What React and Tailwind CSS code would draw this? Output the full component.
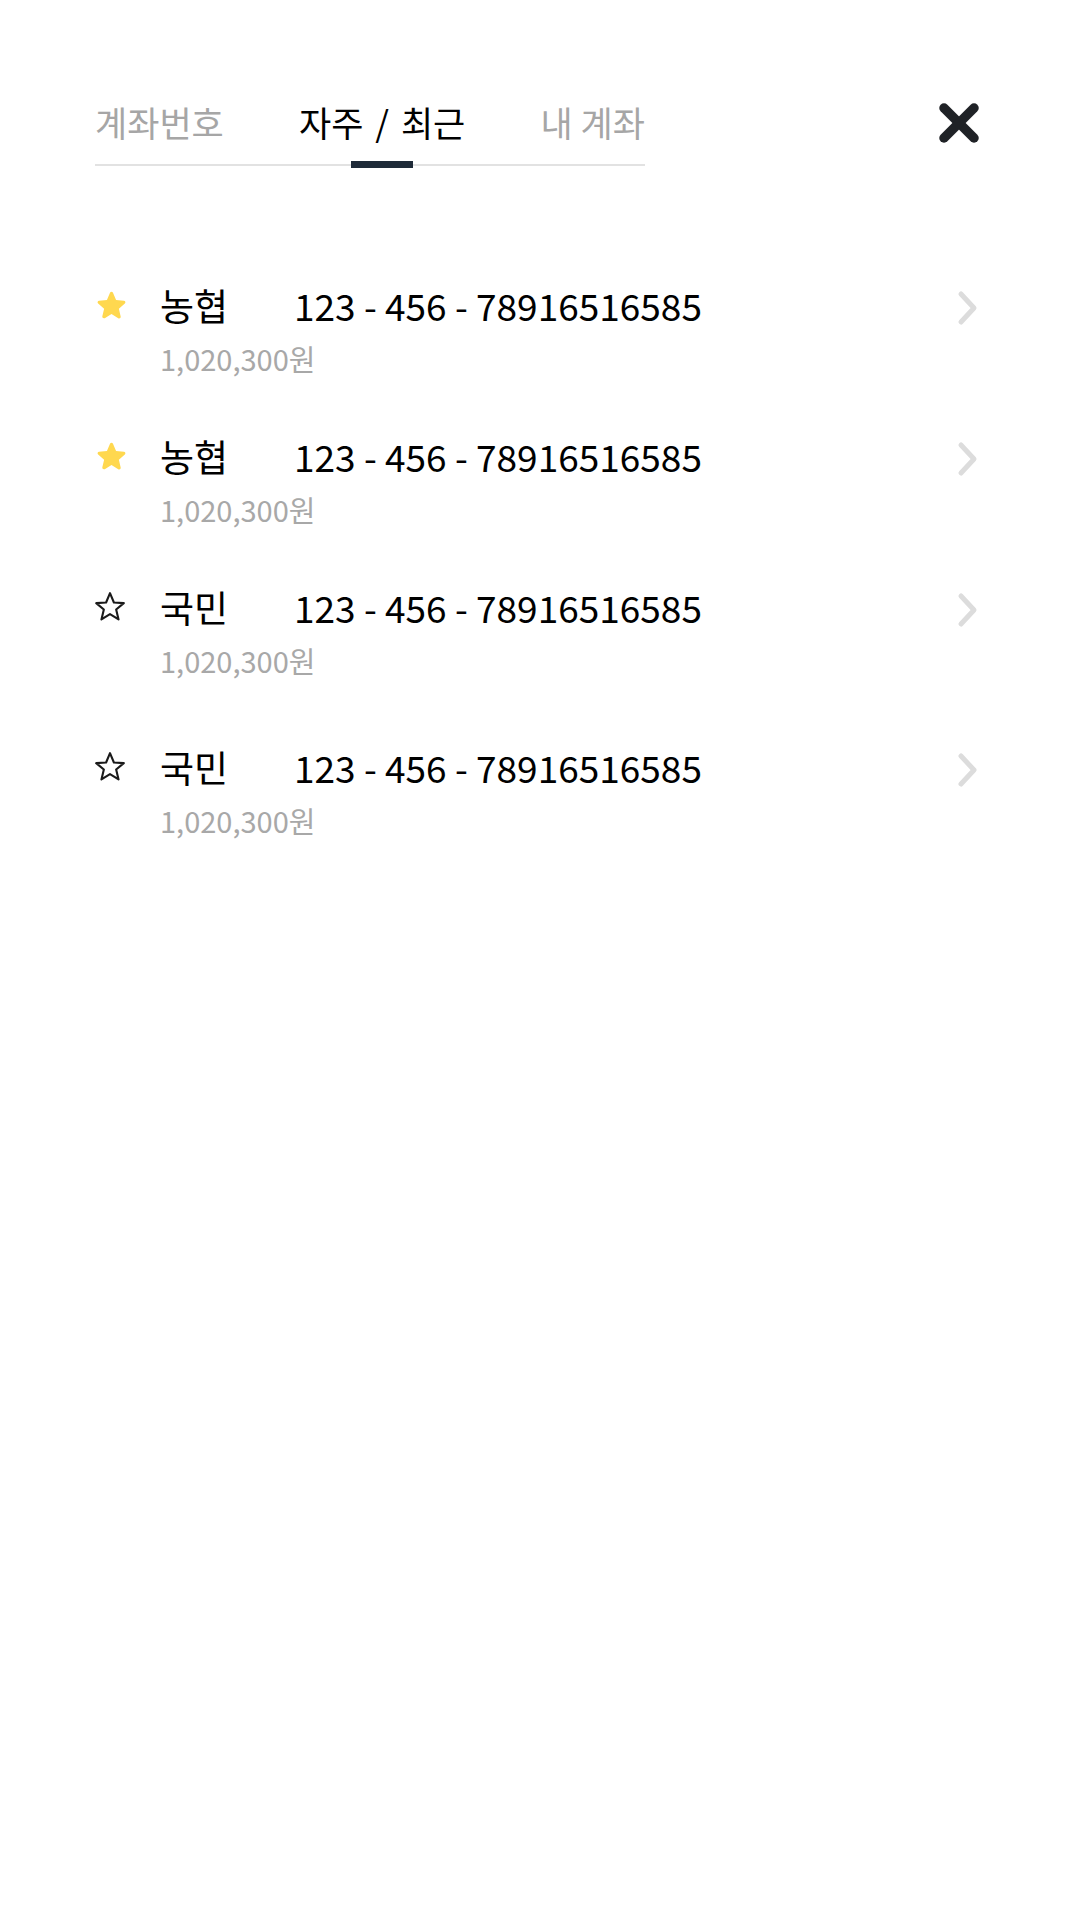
import React from 'react'

const accounts = [
  { bank: '농협', number: '123 - 456 - 78916516585', amount: '1,020,300원', fav: true },
  { bank: '농협', number: '123 - 456 - 78916516585', amount: '1,020,300원', fav: true },
  { bank: '국민', number: '123 - 456 - 78916516585', amount: '1,020,300원', fav: false },
  { bank: '국민', number: '123 - 456 - 78916516585', amount: '1,020,300원', fav: false },
]

const StarIcon = ({ filled }) =>
  filled ? (
    <svg width="39" height="39" viewBox="0 0 24 24" className="-ml-[3px]">
      <path
        fill="#FFD84F"
        d="M12 17.27l4.15 2.51c.76.46 1.69-.22 1.49-1.08l-1.1-4.72 3.67-3.18c.67-.58.31-1.68-.57-1.75l-4.83-.41-1.89-4.46c-.34-.81-1.5-.81-1.84 0L9.19 8.63l-4.83.41c-.88.07-1.24 1.17-.57 1.75l3.67 3.18-1.1 4.72c-.2.86.73 1.54 1.49 1.08l4.15-2.5z"
      />
    </svg>
  ) : (
    <svg width="36" height="36" viewBox="0 0 24 24" className="-ml-[3px]">
      <polygon
        points="12,2.8 14.6,9 21.2,9.4 16.1,13.7 17.7,20.3 12,16.7 6.3,20.3 7.9,13.7 2.8,9.4 9.4,9"
        fill="none"
        stroke="#1a1a1a"
        strokeWidth="1.4"
        strokeLinejoin="round"
      />
    </svg>
  )

const Chevron = () => (
  <svg width="24" height="36" viewBox="0 0 24 36" className="mt-[6px]">
    <polyline
      points="5,4 18,18 5,32"
      fill="none"
      stroke="#dcdcdc"
      strokeWidth="5"
      strokeLinecap="round"
      strokeLinejoin="round"
    />
  </svg>
)

const CloseIcon = () => (
  <svg width="42" height="42" viewBox="0 0 42 42">
    <g stroke="#1f2226" strokeWidth="9.5" strokeLinecap="round">
      <line x1="6" y1="6" x2="36" y2="36" />
      <line x1="36" y1="6" x2="6" y2="36" />
    </g>
  </svg>
)

const AccountRow = ({ bank, number, amount, fav, last }) => (
  <div className={`flex items-start ${last ? 'mt-[9px]' : ''}`}>
    <div className="w-[65px] h-[52px] flex items-center shrink-0">
      <StarIcon filled={fav} />
    </div>
    <div className="flex-1">
      <div className="flex items-center h-[52px]">
        <span className="w-[134px] text-[37px] text-black leading-none">{bank}</span>
        <span className="flex-1 text-[37px] text-black leading-none">{number}</span>
        <Chevron />
      </div>
      <div className="text-[29px] text-[#a8a8a8] leading-[40px] mt-[7px]">{amount}</div>
    </div>
  </div>
)

export default function App() {
  return (
    <div className="min-h-screen bg-white font-['Noto_Sans_CJK_KR','Noto_Sans',sans-serif]">
      <header className="flex items-start justify-between pl-[95px] pr-[100px] pt-[94px]">
        <nav className="w-[550px] flex justify-between border-b-2 border-[#e2e2e2] pb-[14px]">
          <button className="text-[35px] leading-[56px] text-[#a6a6a6]">계좌번호</button>
          <button className="relative text-[35px] leading-[56px] text-black [word-spacing:4px]">
            자주 / 최근
            <span className="absolute left-1/2 -translate-x-1/2 -bottom-[18px] w-[62px] h-[7px] bg-[#1e2a38]" />
          </button>
          <button className="text-[35px] leading-[56px] text-[#a6a6a6]">내 계좌</button>
        </nav>
        <div className="pt-[8px]">
          <CloseIcon />
        </div>
      </header>

      <main className="pl-[95px] pr-[100px] pt-[113px] flex flex-col gap-[52px]">
        {accounts.map((a, i) => (
          <AccountRow key={i} {...a} last={i === accounts.length - 1} />
        ))}
      </main>
    </div>
  )
}
